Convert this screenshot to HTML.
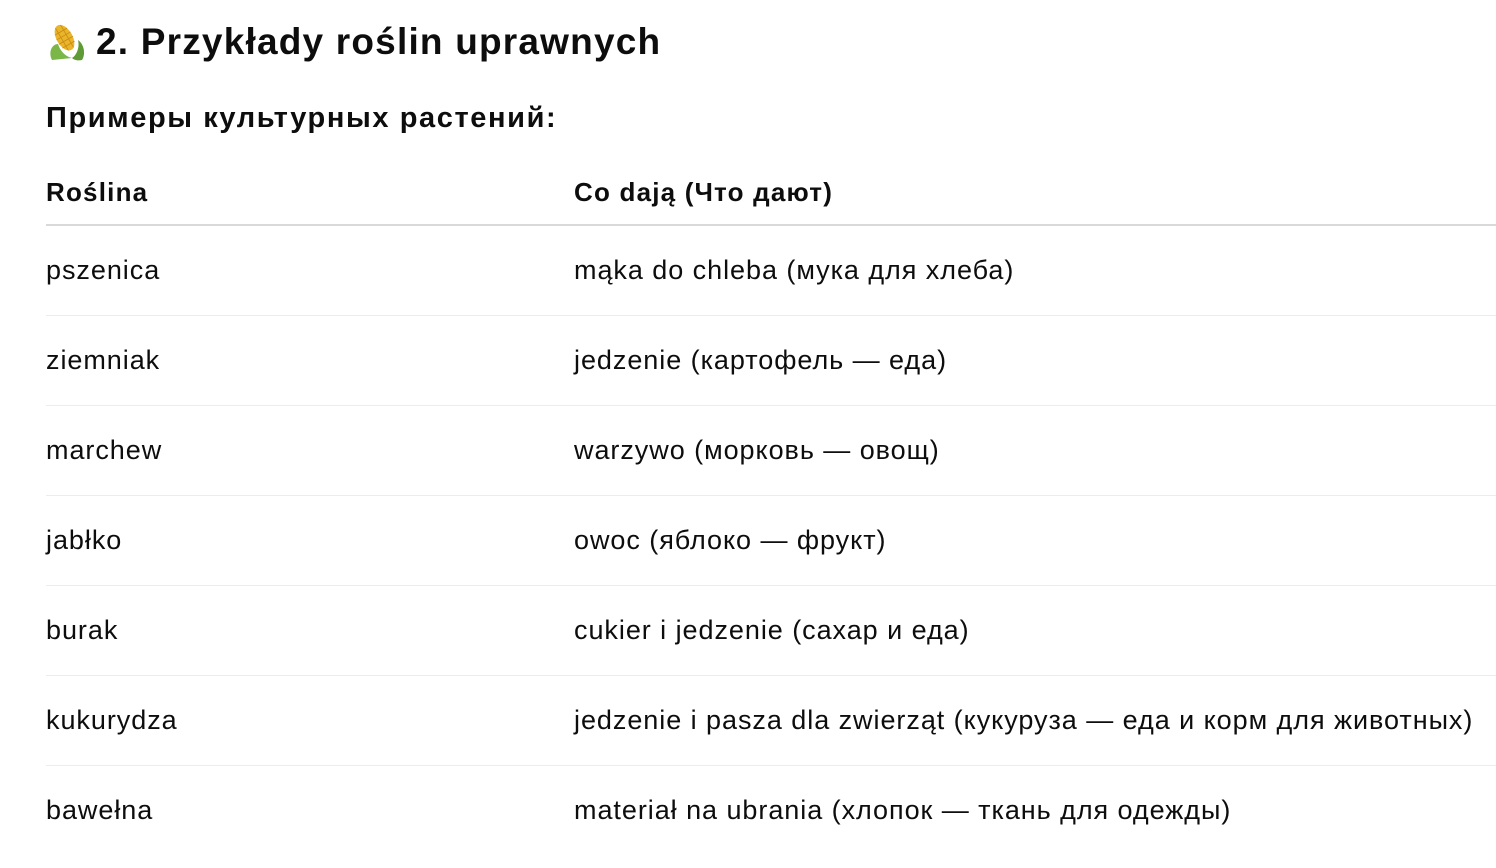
<!DOCTYPE html>
<html><head><meta charset="utf-8"><style>
body{margin:0;background:#fff;color:#0d0d0d;font-family:"Liberation Sans",sans-serif;width:1496px;height:868px;overflow:hidden;position:relative}
h1{position:absolute;left:46px;top:18px;margin:0;font-size:37px;font-weight:bold;line-height:48px;display:flex;align-items:center;letter-spacing:1.2px}
h1 svg{margin-right:8px}
h3{position:absolute;left:46px;top:98px;margin:0;font-size:29px;font-weight:bold;line-height:40px;letter-spacing:1.6px}
table{position:absolute;left:46px;top:160px;border-collapse:collapse;width:1460px;font-size:27px;letter-spacing:0.95px}
th{text-align:left;font-weight:bold;height:64px;border-bottom:2px solid #d9d9d9;padding:0;font-size:26px;letter-spacing:1.2px}
td{height:89px;border-bottom:1px solid #ececec;padding:0}
td:first-child,th:first-child{width:528px}
tr:last-child td{border-bottom:none}
</style></head><body>
<h1><svg width="42" height="40" viewBox="0 0 42 40"><g transform="rotate(-30 21 20)"><ellipse cx="21" cy="15" rx="8" ry="14" fill="#e9b52a"/><path d="M14 8h14M13 13h16M13 18h16M14 23h14M18 2v26M24 2v26" stroke="#c98a14" stroke-width="0.8"/></g><path d="M6 38 C2 30 6 22 12 22 C14 28 18 34 26 36 Z" fill="#7ab648"/><path d="M26 36 C30 34 34 26 32 18 C38 22 40 32 36 38 C32 39 28 38 26 36Z" fill="#5e9a35"/></svg>2. Przykłady roślin uprawnych</h1>
<h3>Примеры культурных растений:</h3>
<table>
<tr><th>Roślina</th><th>Co dają (Что дают)</th></tr>
<tr><td>pszenica</td><td>mąka do chleba (мука для хлеба)</td></tr>
<tr><td>ziemniak</td><td>jedzenie (картофель — еда)</td></tr>
<tr><td>marchew</td><td>warzywo (морковь — овощ)</td></tr>
<tr><td>jabłko</td><td>owoc (яблоко — фрукт)</td></tr>
<tr><td>burak</td><td>cukier i jedzenie (сахар и еда)</td></tr>
<tr><td>kukurydza</td><td>jedzenie i pasza dla zwierząt (кукуруза — еда и корм для животных)</td></tr>
<tr><td>bawełna</td><td>materiał na ubrania (хлопок — ткань для одежды)</td></tr>
</table>
</body></html>
